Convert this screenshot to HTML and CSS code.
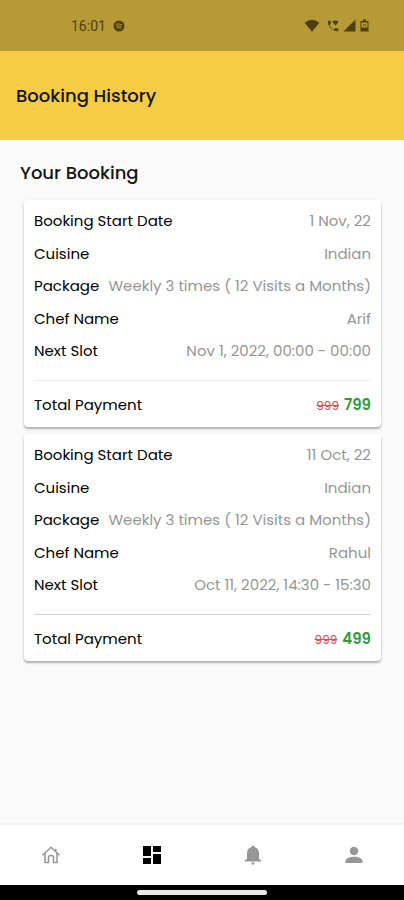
FILE: index.html
```html
<!DOCTYPE html>
<html lang="en">
<head>
<meta charset="utf-8">
<meta name="viewport" content="width=device-width, initial-scale=1">
<title>Booking History</title>
<link rel="stylesheet" href="styles.css">
</head>
<body>
<div class="status">
  <div class="status-group">
    <span>16:01</span>
    <svg class="spot" viewBox="0 0 12 12" aria-hidden="true"><circle cx="6" cy="6" r="5.5" fill="currentColor"/><path d="M2.8 4.3Q6 3.2 9.2 4.8M3.2 6.2Q6 5.3 8.8 6.7M3.6 8Q6 7.2 8.2 8.4" fill="none" stroke="#b69a36" stroke-width=".9"/></svg>
  </div>
  <div class="status-group status-icons">
    <svg class="wifi" viewBox="0 0 16 13" aria-hidden="true"><path d="M.6 3.8Q8-2.4 15.4 3.8L8 12.7Z" fill="currentColor"/></svg>
    <svg class="call" viewBox="0 0 12 12" aria-hidden="true"><path d="M.8.8h2.6l.6 2.9-1.5 1.5a9 9 0 0 0 4.3 4.3l1.5-1.5 3 .6v2.6C5.5 11.5.8 6.5.8.8Z" fill="currentColor"/><path d="M5.3 1.8Q8.5-.6 11.7 1.8L8.500 5.6Z" fill="currentColor"/></svg>
    <svg class="signal" viewBox="0 0 13 13" aria-hidden="true"><path d="M12.5.5v12H.5Z" fill="currentColor"/></svg>
    <svg class="battery" viewBox="0 0 9 13" aria-hidden="true"><path d="M3 .5h3V2h2.500v10.500h-8V2H3Z" fill="currentColor"/><path d="M1.500 3.500h6v5h-6Z" fill="#b69a36"/><path d="M3 6h3" stroke="currentColor"/></svg>
  </div>
</div>
<header class="bar"><h1>Booking History</h1></header>
<main>
  <h2>Your Booking</h2>
  <article class="card">
    <dl class="rows">
      <div class="row"><dt>Booking Start Date</dt><dd>1 Nov, 22</dd></div>
      <div class="row"><dt>Cuisine</dt><dd>Indian</dd></div>
      <div class="row"><dt>Package</dt><dd>Weekly 3 times ( 12 Visits a Months)</dd></div>
      <div class="row"><dt>Chef Name</dt><dd>Arif</dd></div>
      <div class="row"><dt>Next Slot</dt><dd>Nov 1, 2022, 00:00 - 00:00</dd></div>
    </dl>
    <div class="row total"><span>Total Payment</span><span class="price"><del>999</del><strong>799</strong></span></div>
  </article>
  <article class="card">
    <dl class="rows">
      <div class="row"><dt>Booking Start Date</dt><dd>11 Oct, 22</dd></div>
      <div class="row"><dt>Cuisine</dt><dd>Indian</dd></div>
      <div class="row"><dt>Package</dt><dd>Weekly 3 times ( 12 Visits a Months)</dd></div>
      <div class="row"><dt>Chef Name</dt><dd>Rahul</dd></div>
      <div class="row"><dt>Next Slot</dt><dd>Oct 11, 2022, 14:30 - 15:30</dd></div>
    </dl>
    <div class="row total total-strong"><span>Total Payment</span><span class="price"><del>999</del><strong>499</strong></span></div>
  </article>
</main>
<nav class="tabs">
  <a href="#home" aria-label="Home"><svg viewBox="0 0 20 20" fill="none" stroke="currentColor" stroke-width="1.5" aria-hidden="true"><path d="M1.5 10.3 10 2.3l8.5 8M4 8.3v9.2h3.500v-5.300q0-1.700 2.500-1.700t2.500 1.700v5.300H16V8.300M14.800 6.500V3.800"/></svg></a>
  <a href="#bookings" class="active" aria-label="Bookings" aria-current="page"><svg viewBox="0 0 20 20" fill="currentColor" aria-hidden="true"><path d="M1 1h8v10H1zM11 1h8v6h-8zM1 13h8v6H1zM11 9h8v10h-8z"/></svg></a>
  <a href="#alerts" aria-label="Notifications"><svg viewBox="0 0 20 20" fill="currentColor" aria-hidden="true"><path d="M10 .5q1.400 0 1.500 1.600C14.700 3 16 5.500 16 8.500v5.300l2.300 1.700v1H1.700v-1L4 13.800V8.500C4 5.500 5.300 3 8.500 2.100Q8.600.5 10 .5ZM8.200 17.500h3.600Q11.500 19.700 10 19.700T8.200 17.500Z"/></svg></a>
  <a href="#profile" aria-label="Profile"><svg viewBox="0 0 20 20" fill="currentColor" aria-hidden="true"><circle cx="10" cy="6" r="4.200"/><path d="M1.500 18v-1.500C1.500 13 6.500 11.800 10 11.800s8.500 1.200 8.500 4.700V18Z"/></svg></a>
</nav>
<div class="gesture"><span></span></div>
</body>
</html>
```

FILE: styles.css
```css
* { box-sizing: border-box; }
body {
  margin: 0;
  min-height: 100vh;
  display: flex;
  flex-direction: column;
  background: #fafafa;
  color: #141414;
  font: 400 15px/20px Poppins, Inter, sans-serif;
}
h1, h2, dl, dd { margin: 0; }
.status {
  display: flex;
  justify-content: space-between;
  align-items: center;
  height: 51px;
  padding: 0 35px 0 71px;
  background: #b69a36;
  color: #4d3f12;
  font: 400 14px/20px Roboto, sans-serif;
}
.status-group { display: flex; align-items: center; gap: 7px; }
.status-icons { gap: 4px; }
.status svg { display: block; }
.spot { width: 12px; height: 12px; }
.wifi { width: 16px; height: 13px; margin-right: 3px; }
.call { width: 12px; height: 12px; }
.signal { width: 13px; height: 13px; }
.battery { width: 9px; height: 13px; }
.bar {
  display: flex;
  align-items: center;
  height: 89px;
  padding: 0 16px;
  background: #f5cc43;
}
h1, h2 { font-size: 18px; font-weight: 500; line-height: 26px; }
main { flex: 1; padding: 20px 23px 20px 24px; }
h2 { margin: 0 -4px 14px; }
.card {
  margin-bottom: 7px;
  padding: 11px 10px 12px;
  background: #fff;
  border-radius: 4px;
  box-shadow: 0 2px 2px rgba(0, 0, 0, .26), 0 1px 4px rgba(0, 0, 0, .08);
}
.rows {
  display: flex;
  flex-direction: column;
  justify-content: space-between;
  min-height: 150px;
}
.row { display: flex; justify-content: space-between; align-items: center; gap: 8px; }
dt, .total { color: #000; }
dd { color: #959595; text-align: right; }
.total { margin-top: 19px; padding-top: 14px; border-top: 1px solid #eee; }
.total-strong { border-color: #d2d2d2; }
.price { display: flex; align-items: baseline; gap: 5px; line-height: 16px; }
del { color: #e8484c; font-size: 12px; }
strong { color: #2f9c3b; font-size: 15px; font-weight: 600; }
.tabs {
  display: grid;
  grid-template-columns: repeat(4, 1fr);
  height: 62px;
  padding-bottom: 1px;
  background: #fff;
  border-top: 2px solid #f3f3f3;
}
.tabs a { display: flex; align-items: center; justify-content: center; color: #969696; }
.tabs svg { width: 20px; height: 20px; }
.tabs .active { color: #000; }
.gesture { display: flex; justify-content: center; align-items: center; height: 15px; background: #000; }
.gesture span { width: 130px; height: 5px; border-radius: 3px; background: #e8e8e8; }
```
